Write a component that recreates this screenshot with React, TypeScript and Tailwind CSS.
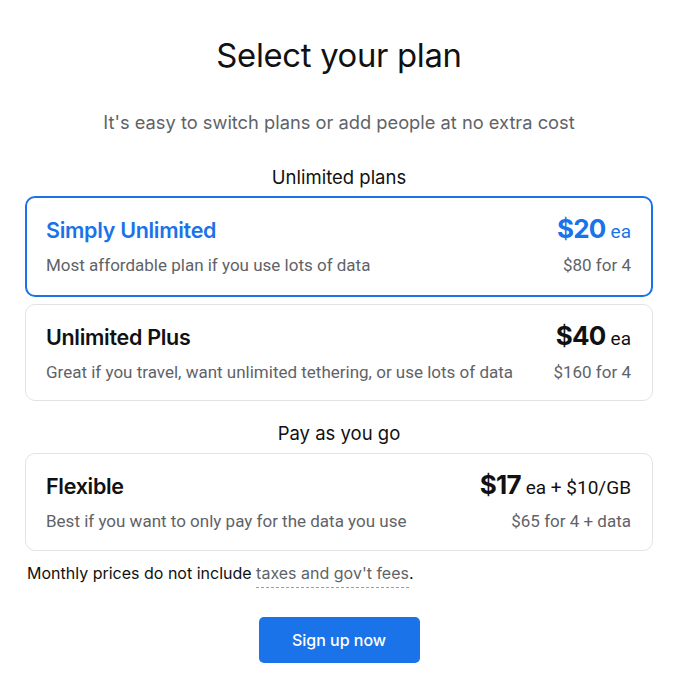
const plans1 = [
  {
    name: 'Simply Unlimited',
    desc: 'Most affordable plan if you use lots of data',
    price: '$20',
    unit: 'ea',
    total: '$80 for 4',
    selected: true,
  },
  {
    name: 'Unlimited Plus',
    desc: 'Great if you travel, want unlimited tethering, or use lots of data',
    price: '$40',
    unit: 'ea',
    total: '$160 for 4',
    selected: false,
  },
]

const flexible = {
  name: 'Flexible',
  desc: 'Best if you want to only pay for the data you use',
  price: '$17',
  unit: 'ea + $10/GB',
  total: '$65 for 4 + data',
  selected: false,
}

type Plan = typeof flexible

function PlanCard({ plan }: { plan: Plan }) {
  return (
    <div
      className={
        plan.selected
          ? 'rounded-[10px] border-2 border-[#1a73e8] bg-white pl-[19px] pr-[20px] pt-[11px] pb-[16px]'
          : 'rounded-[10px] border border-[#e3e3e3] bg-white pl-[20px] pr-[21px] pt-[11px] pb-[15px]'
      }
    >
      <div className="flex items-baseline justify-between">
        <div
          className={
            plan.selected
              ? 'font-["Inter",sans-serif] text-[21.5px] font-semibold tracking-[-0.3px] text-[#1a73e8]'
              : 'font-["Inter",sans-serif] text-[21.5px] font-semibold tracking-[-0.3px] text-[#111]'
          }
        >
          {plan.name}
        </div>
        <div className={plan.selected ? 'text-[#1a73e8]' : 'text-[#111]'}>
          <span className='font-["Inter",sans-serif] text-[26px] font-bold tracking-[-0.8px]'>{plan.price}</span>
          <span className='ml-[5px] font-["Roboto",sans-serif] text-[19px]'>{plan.unit}</span>
        </div>
      </div>
      <div className='mt-[5px] flex items-center justify-between font-["Roboto",sans-serif] text-[17px] text-[#5f6368]'>
        <span>{plan.desc}</span>
        <span>{plan.total}</span>
      </div>
    </div>
  )
}

export default function App() {
  return (
    <div className="min-h-screen bg-white">
      <div className="ml-[25px] w-[628px] pt-[35px]">
        <h1 className='text-center font-["Inter",sans-serif] text-[32.8px] font-normal leading-[40px] tracking-[-0.3px] text-[#111]'>
          Select your plan
        </h1>
        <p className='mt-[35px] text-center font-["Inter",sans-serif] text-[18.3px] leading-[24px] text-[#5f6368]'>
          It's easy to switch plans or add people at no extra cost
        </p>
        <h2 className='mt-[31px] text-center font-["Inter",sans-serif] text-[18.5px] leading-[24px] text-[#111]'>
          Unlimited plans
        </h2>
        <div className="mt-[7px] flex flex-col gap-[7px]">
          {plans1.map((p) => (
            <PlanCard key={p.name} plan={p} />
          ))}
        </div>
        <h2 className='mt-[20px] text-center font-["Inter",sans-serif] text-[18.5px] leading-[24px] text-[#111]'>
          Pay as you go
        </h2>
        <div className="mt-[8px]">
          <PlanCard plan={flexible} />
        </div>
        <p className='mt-[11px] pl-[2px] font-["Inter",sans-serif] text-[16px] leading-[22px] text-[#111]'>
          Monthly prices do not include{' '}
          <span className="border-b border-dashed border-[#9aa0a6] pb-[4px] text-[#5f6368]">taxes and gov't fees</span>.
        </p>
        <div className="mt-[33px] flex justify-center">
          <button className='h-[46px] w-[161px] rounded-[5px] bg-[#1a73e8] font-["Inter",sans-serif] text-[16px] font-medium text-white'>
            Sign up now
          </button>
        </div>
      </div>
    </div>
  )
}
